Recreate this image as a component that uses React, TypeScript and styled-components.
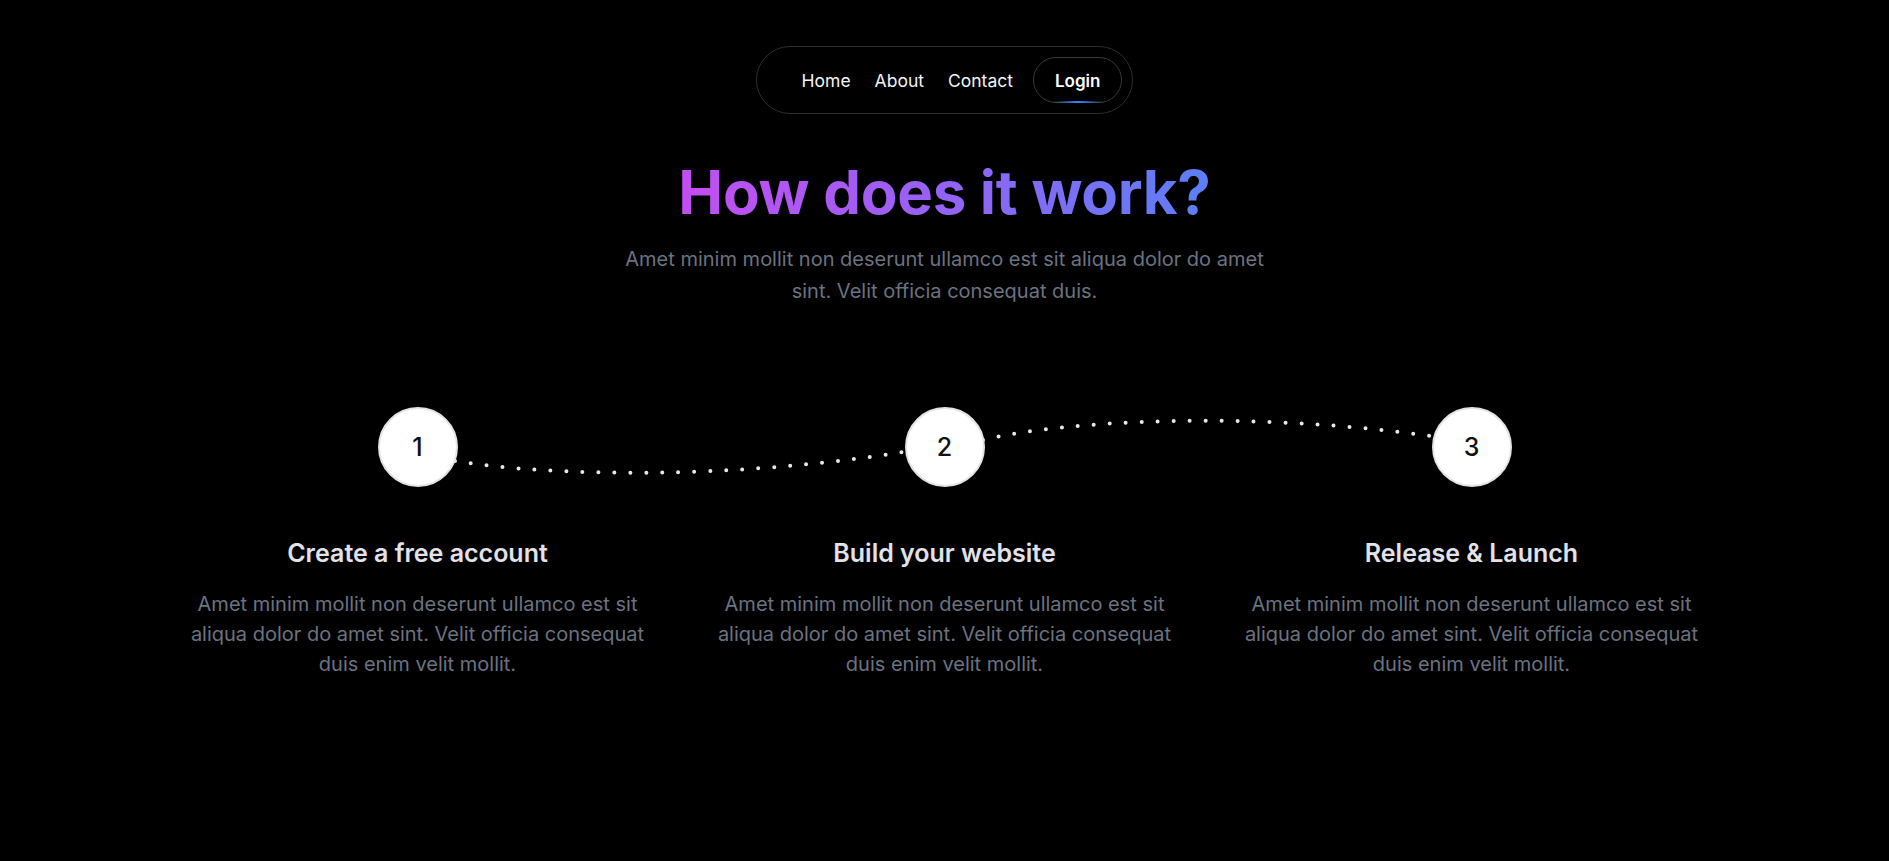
import React from "react";
import styled, { createGlobalStyle } from "styled-components";

const GlobalStyle = createGlobalStyle`
  html, body {
    margin: 0;
    padding: 0;
    background: #000;
  }
  body {
    font-family: Inter, "Noto Sans", sans-serif;
    color: #fff;
    -webkit-font-smoothing: antialiased;
  }
  * { box-sizing: border-box; }
`;

const Page = styled.main`
  min-height: 100vh;
  background: #000;
  display: flex;
  flex-direction: column;
  align-items: center;
  padding-top: 46px;
`;

const NavPill = styled.nav`
  height: 68px;
  display: flex;
  align-items: center;
  border: 1px solid #2c2c2e;
  border-radius: 999px;
  padding: 0 10px 0 45px;
`;

const NavLinks = styled.div`
  display: flex;
  align-items: center;
  gap: 24px;
  padding-top: 1px;
`;

const NavLink = styled.a`
  font-size: 17.5px;
  font-weight: 400;
  color: #f4f4f5;
  text-decoration: none;
  cursor: pointer;
`;

const LoginButton = styled.button`
  position: relative;
  margin-left: 20px;
  height: 46px;
  padding: 1px 21px 0;
  border-radius: 999px;
  border: 1px solid #3a3a3d;
  background: #000;
  color: #fff;
  font-family: Inter, sans-serif;
  font-size: 17px;
  font-weight: 600;
  cursor: pointer;
`;

const LoginGlow = styled.span`
  position: absolute;
  left: 50%;
  bottom: -1px;
  width: 52px;
  height: 2px;
  transform: translateX(-50%);
  background: linear-gradient(90deg, transparent, #3b82f6, transparent);
`;

const Heading = styled.h1`
  margin: 42px 0 0;
  font-size: 60px;
  line-height: 72px;
  font-weight: 700;
  letter-spacing: -0.3px;
  background-image: linear-gradient(90deg, #c44ef2 0%, #9a60f4 45%, #5b7ff6 100%);
  -webkit-background-clip: text;
  background-clip: text;
  -webkit-text-fill-color: transparent;
  color: #9a60f4;
`;

const Subtitle = styled.p`
  margin: 15px 0 0;
  max-width: 672px;
  text-align: center;
  font-size: 20px;
  line-height: 32px;
  color: #6b7280;
`;

const Steps = styled.section`
  position: relative;
  margin-top: 100px;
  width: 1581px;
  display: grid;
  grid-template-columns: repeat(3, 1fr);
`;

const Connector = styled.svg`
  position: absolute;
  top: 0;
  left: 0;
  width: 1581px;
  height: 80px;
  overflow: visible;
  pointer-events: none;
  z-index: 0;
`;

const Step = styled.div`
  display: flex;
  flex-direction: column;
  align-items: center;
  text-align: center;
`;

const Circle = styled.div`
  position: relative;
  z-index: 1;
  width: 80px;
  height: 80px;
  border-radius: 50%;
  background: #fff;
  border: 2px solid #e4e4e7;
  display: flex;
  align-items: center;
  justify-content: center;
  font-size: 25px;
  font-weight: 500;
  color: #111;
`;

const StepTitle = styled.h3`
  margin: 50px 0 0;
  font-size: 25px;
  line-height: 32px;
  font-weight: 600;
  color: #e2e2e8;
`;

const StepText = styled.p`
  margin: 20px 0 0;
  max-width: 475px;
  font-size: 20px;
  line-height: 30px;
  color: #6b7280;
`;

const steps = [
  { n: 1, title: "Create a free account" },
  { n: 2, title: "Build your website" },
  { n: 3, title: "Release & Launch" },
];

const body =
  "Amet minim mollit non deserunt ullamco est sit aliqua dolor do amet sint. Velit officia consequat duis enim velit mollit.";

export default function App() {
  return (
    <>
      <GlobalStyle />
      <Page>
        <NavPill>
          <NavLinks>
            <NavLink>Home</NavLink>
            <NavLink>About</NavLink>
            <NavLink>Contact</NavLink>
          </NavLinks>
          <LoginButton>
            Login
            <LoginGlow />
          </LoginButton>
        </NavPill>

        <Heading>How does it work?</Heading>
        <Subtitle>
          Amet minim mollit non deserunt ullamco est sit aliqua dolor do amet
          sint. Velit officia consequat duis.
        </Subtitle>

        <Steps>
          <Connector viewBox="0 0 1581 80">
            <path
              d="M301 54 C400 70 580 72 749 45"
              fill="none"
              stroke="#e8e8ea"
              strokeWidth="4"
              strokeLinecap="round"
              strokeDasharray="0 16"
            />
            <path
              d="M829 33 C910 13 1100 4 1276 29"
              fill="none"
              stroke="#e8e8ea"
              strokeWidth="4"
              strokeLinecap="round"
              strokeDasharray="0 16"
            />
          </Connector>
          {steps.map((s) => (
            <Step key={s.n}>
              <Circle>{s.n}</Circle>
              <StepTitle>{s.title}</StepTitle>
              <StepText>{body}</StepText>
            </Step>
          ))}
        </Steps>
      </Page>
    </>
  );
}
